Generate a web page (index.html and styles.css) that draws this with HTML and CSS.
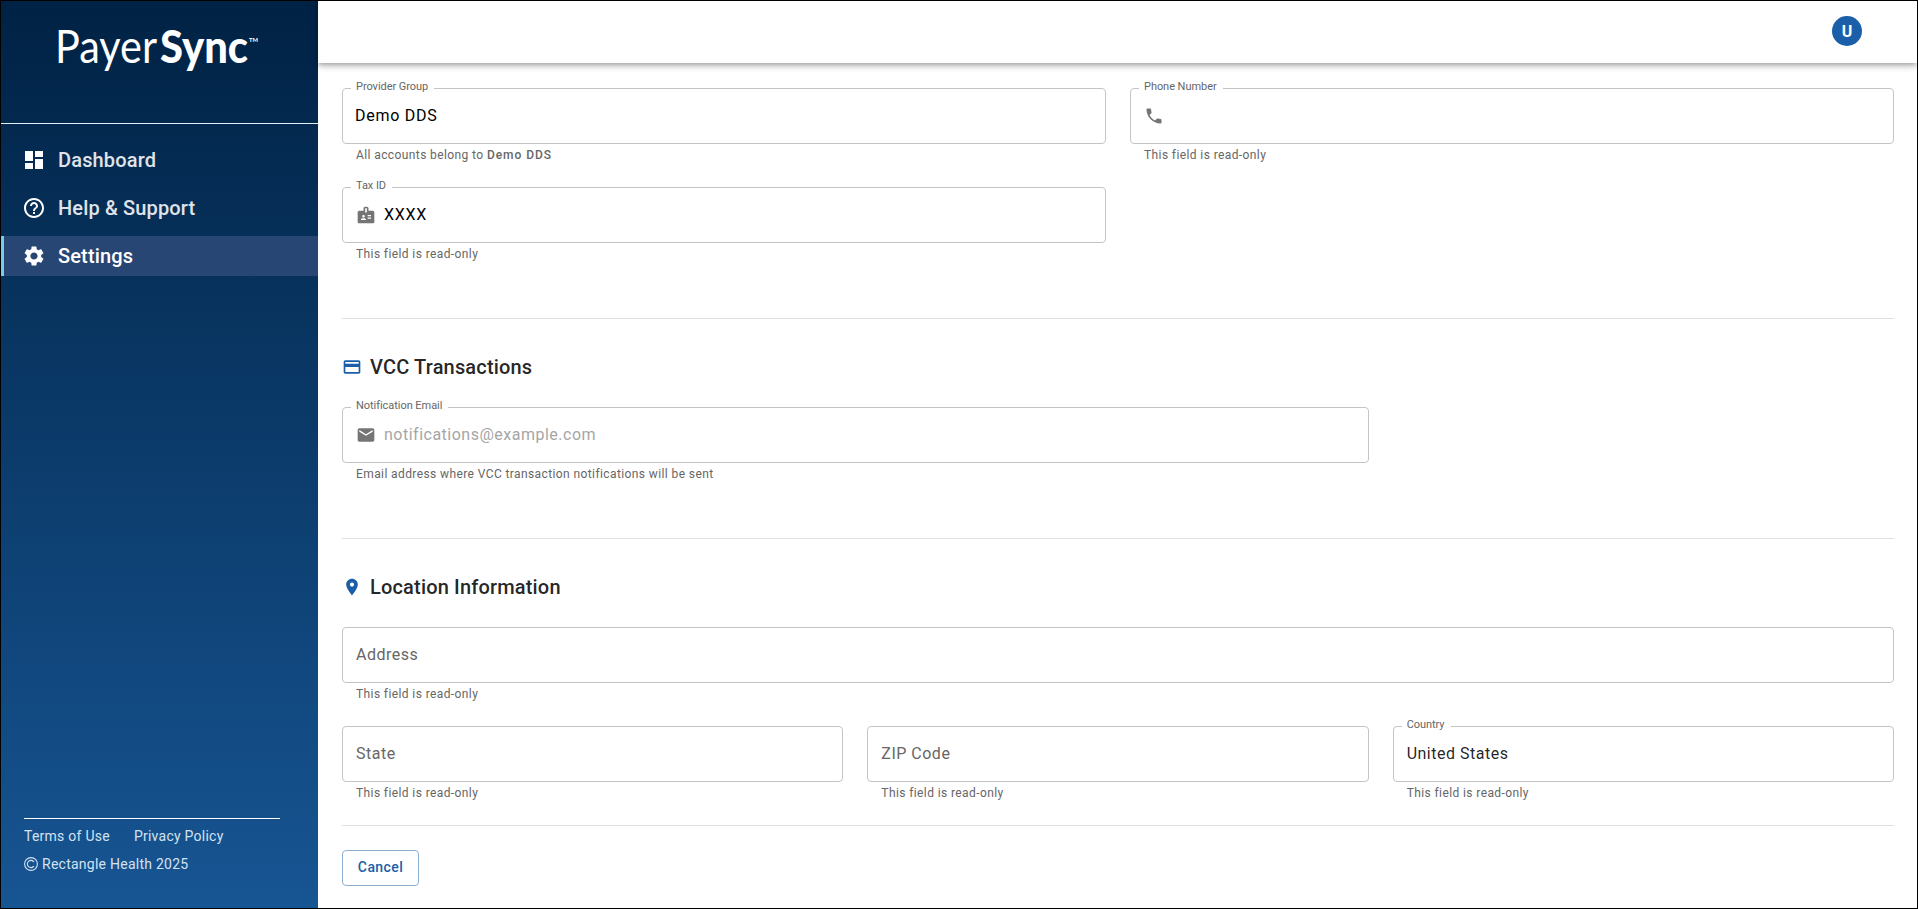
FILE: index.html
```
<!DOCTYPE html>
<html lang="en">
<head>
    <meta charset="UTF-8">
    <meta name="viewport" content="width=device-width, initial-scale=1.0">
    <title>PayerSync - Settings</title>
    <link rel="stylesheet" href="styles.css">
</head>
<body>
    <div class="app">
        <aside class="sidebar">
            <div class="logo">
                <svg width="210" height="54" viewBox="0 0 210 54" fill="#fff">
                    <text class="logo-light" x="-3" y="41" textLength="102" lengthAdjust="spacingAndGlyphs">Payer</text>
                    <text class="logo-bold" x="102" y="41" textLength="88" lengthAdjust="spacingAndGlyphs">Sync</text>
                    <text class="logo-tm" x="191" y="20" textLength="9" lengthAdjust="spacingAndGlyphs">TM</text>
                </svg>
            </div>
            <nav class="menu">
                <a class="menu-item" href="#">
                    <svg viewBox="0 0 24 24"><path d="M3 13h8V3H3v10zm0 8h8v-6H3v6zm10 0h8V11h-8v10zm0-18v6h8V3h-8z"/></svg>
                    <span>Dashboard</span>
                </a>
                <a class="menu-item" href="#">
                    <svg viewBox="0 0 24 24"><path d="M11 18h2v-2h-2v2zm1-16C6.48 2 2 6.48 2 12s4.48 10 10 10 10-4.48 10-10S17.52 2 12 2zm0 18c-4.41 0-8-3.59-8-8s3.59-8 8-8 8 3.59 8 8-3.59 8-8 8zm0-14c-2.21 0-4 1.79-4 4h2c0-1.1.9-2 2-2s2 .9 2 2c0 2-3 1.75-3 5h2c0-2.25 3-2.5 3-5 0-2.21-1.79-4-4-4z"/></svg>
                    <span>Help &amp; Support</span>
                </a>
                <a class="menu-item active" href="#">
                    <svg viewBox="0 0 24 24"><path d="M19.14 12.94c.04-.3.06-.61.06-.94 0-.32-.02-.64-.07-.94l2.03-1.58c.18-.14.23-.41.12-.61l-1.92-3.32c-.12-.22-.37-.29-.59-.22l-2.39.96c-.5-.38-1.03-.7-1.62-.94l-.36-2.54c-.04-.24-.24-.41-.48-.41h-3.84c-.24 0-.43.17-.47.41l-.36 2.54c-.59.24-1.13.57-1.62.94l-2.39-.96c-.22-.08-.47 0-.59.22L2.74 8.87c-.12.21-.08.47.12.61l2.03 1.58c-.05.3-.09.63-.09.94s.02.64.07.94l-2.03 1.58c-.18.14-.23.41-.12.61l1.92 3.32c.12.22.37.29.59.22l2.39-.96c.5.38 1.03.7 1.62.94l.36 2.54c.05.24.24.41.48.41h3.84c.24 0 .44-.17.47-.41l.36-2.54c.59-.24 1.13-.56 1.62-.94l2.39.96c.22.08.47 0 .59-.22l1.92-3.32c.12-.22.07-.47-.12-.61l-2.01-1.58zM12 15.6c-1.98 0-3.6-1.62-3.6-3.6s1.62-3.6 3.6-3.6 3.6 1.62 3.6 3.6-1.62 3.6-3.6 3.6z"/></svg>
                    <span>Settings</span>
                </a>
            </nav>
            <footer class="sidebar-footer">
                <div class="footer-links">
                    <a href="#">Terms of Use</a>
                    <a href="#">Privacy Policy</a>
                </div>
                <div class="copyright">
                    <svg viewBox="0 0 14 14"><circle cx="7" cy="7" r="6.4"/><path d="M9.9 4.9A3.6 3.6 0 1 0 9.9 9.1"/></svg>
                    <span>Rectangle Health 2025</span>
                </div>
            </footer>
        </aside>

        <div class="main">
            <header class="topbar">
                <div class="avatar">U</div>
            </header>

            <div class="content">
                <section class="section section-first">
                    <div class="grid">
                        <div class="field col-6">
                            <div class="box select">
                                <label>Provider Group</label>
                                <span class="value dark">Demo DDS</span>
                            </div>
                            <p class="helper">All accounts belong to <strong>Demo DDS</strong></p>
                        </div>
                        <div class="field col-6">
                            <div class="box">
                                <label>Phone Number</label>
                                <svg viewBox="0 0 24 24"><path d="M6.62 10.79c1.44 2.83 3.76 5.14 6.59 6.59l2.2-2.2c.27-.27.67-.36 1.02-.24 1.12.37 2.33.57 3.57.57.55 0 1 .45 1 1V20c0 .55-.45 1-1 1-9.39 0-17-7.61-17-17 0-.55.45-1 1-1h3.5c.55 0 1 .45 1 1 0 1.25.2 2.45.57 3.57.11.35.03.74-.25 1.02l-2.2 2.2z"/></svg>
                            </div>
                            <p class="helper">This field is read-only</p>
                        </div>
                        <div class="field col-6">
                            <div class="box">
                                <label>Tax ID</label>
                                <svg viewBox="0 0 24 24"><path d="M20 7h-5V4c0-1.1-.9-2-2-2h-2c-1.1 0-2 .9-2 2v3H4c-1.1 0-2 .9-2 2v11c0 1.1.9 2 2 2h16c1.1 0 2-.9 2-2V9c0-1.1-.9-2-2-2zM9 12c.83 0 1.5.67 1.5 1.5S9.83 15 9 15s-1.5-.67-1.5-1.5S8.17 12 9 12zm3 6H6v-.75c0-1 2-1.5 3-1.5s3 .5 3 1.5V18zm1-9h-2V4h2v5zm5 7.5h-4V15h4v1.5zm0-3h-4V12h4v1.5z"/></svg>
                                <span class="value dark">XXXX</span>
                            </div>
                            <p class="helper">This field is read-only</p>
                        </div>
                    </div>
                </section>

                <section class="section">
                    <h2>
                        <svg viewBox="0 0 24 24"><path d="M20 4H4c-1.11 0-1.99.89-1.99 2L2 18c0 1.11.89 2 2 2h16c1.11 0 2-.89 2-2V6c0-1.11-.89-2-2-2zm0 14H4v-6h16v6zm0-10H4V6h16v2z"/></svg>
                        VCC Transactions
                    </h2>
                    <div class="grid">
                        <div class="field col-8">
                            <div class="box">
                                <label>Notification Email</label>
                                <svg viewBox="0 0 24 24"><path d="M20 4H4c-1.1 0-1.99.9-1.99 2L2 18c0 1.1.9 2 2 2h16c1.1 0 2-.9 2-2V6c0-1.1-.9-2-2-2zm0 4l-8 5-8-5V6l8 5 8-5v2z"/></svg>
                                <span class="value placeholder">notifications@example.com</span>
                            </div>
                            <p class="helper">Email address where VCC transaction notifications will be sent</p>
                        </div>
                    </div>
                </section>

                <section class="section section-last">
                    <h2>
                        <svg viewBox="0 0 24 24"><path d="M12 2C8.13 2 5 5.13 5 9c0 5.25 7 13 7 13s7-7.75 7-13c0-3.87-3.13-7-7-7zm0 9.5c-1.38 0-2.5-1.12-2.5-2.5s1.12-2.5 2.5-2.5 2.5 1.12 2.5 2.5-1.12 2.5-2.5 2.5z"/></svg>
                        Location Information
                    </h2>
                    <div class="grid">
                        <div class="field col-12">
                            <div class="box"><span class="value muted">Address</span></div>
                            <p class="helper">This field is read-only</p>
                        </div>
                        <div class="field col-4">
                            <div class="box"><span class="value muted">State</span></div>
                            <p class="helper">This field is read-only</p>
                        </div>
                        <div class="field col-4">
                            <div class="box"><span class="value muted">ZIP Code</span></div>
                            <p class="helper">This field is read-only</p>
                        </div>
                        <div class="field col-4">
                            <div class="box">
                                <label>Country</label>
                                <span class="value">United States</span>
                            </div>
                            <p class="helper">This field is read-only</p>
                        </div>
                    </div>
                </section>

                <div class="actions">
                    <button class="btn-cancel">Cancel</button>
                </div>
            </div>
        </div>
    </div>
</body>
</html>
```
FILE: styles.css
```
* {
    box-sizing: border-box;
}

body {
    margin: 0;
    font-family: Roboto, "Liberation Sans", sans-serif;
    color: rgba(0, 0, 0, 0.87);
}

.app {
    display: flex;
    height: 100vh;
    border: 1px solid #000;
    background-color: #fff;
    overflow: hidden;
}

/* Sidebar */
.sidebar {
    width: 317px;
    flex-shrink: 0;
    display: flex;
    flex-direction: column;
    background: linear-gradient(180deg, #002244 0%, #175593 100%);
    color: #fff;
}

.logo {
    height: 123px;
    padding: 21px 0 0 57px;
    border-bottom: 1px solid #e3edf6;
}

.logo svg {
    display: block;
    overflow: visible;
}

.logo-light {
    font-family: Lato, sans-serif;
    font-size: 46px;
    font-weight: 400;
}

.logo-bold {
    font-family: Lato, sans-serif;
    font-size: 46px;
    font-weight: 900;
}

.logo-tm {
    font-family: Lato, sans-serif;
    font-size: 6px;
    font-weight: 700;
}

.menu {
    display: flex;
    flex-direction: column;
    gap: 8px;
    padding-top: 16px;
}

.menu-item {
    display: flex;
    align-items: center;
    gap: 12px;
    height: 40px;
    padding-left: 18px;
    border-left: 3px solid transparent;
    color: #e0e4e9;
    font-size: 20px;
    font-weight: 500;
    letter-spacing: 0.15px;
    text-decoration: none;
}

.menu-item svg {
    width: 24px;
    height: 24px;
    fill: #fff;
}

.menu-item.active {
    background-color: #284673;
    border-left-color: #74cbea;
    color: #fff;
}

.sidebar-footer {
    width: 256px;
    margin: auto 0 34px 23px;
    padding-top: 7px;
    border-top: 1px solid #fff;
    font-size: 14px;
    line-height: 20px;
    letter-spacing: 0.25px;
    color: #d3e2f2;
}

.footer-links {
    display: flex;
    gap: 24px;
}

.footer-links a {
    color: inherit;
    text-decoration: none;
}

.copyright {
    display: flex;
    align-items: center;
    gap: 4px;
    margin-top: 8px;
}

.copyright svg {
    width: 14px;
    height: 14px;
    fill: none;
    stroke: #d3e2f2;
    stroke-width: 1.1;
}

/* Main area */
.main {
    flex: 1;
    min-width: 0;
}

.topbar {
    position: relative;
    display: flex;
    align-items: center;
    justify-content: flex-end;
    height: 62px;
    padding: 0 55px 2px 0;
    background-color: #fff;
    box-shadow: 0 2px 4px -1px rgba(0, 0, 0, 0.2), 0 4px 5px 0 rgba(0, 0, 0, 0.14), 0 1px 10px 0 rgba(0, 0, 0, 0.12);
}

.avatar {
    width: 30px;
    height: 30px;
    border-radius: 50%;
    background-color: #1a5fa8;
    color: #fff;
    font-size: 16px;
    font-weight: 700;
    line-height: 31px;
    text-align: center;
}

.content {
    padding: 25px 23px 0 24px;
}

.section {
    height: 220px;
    padding-top: 35px;
    border-bottom: 1px solid #e0e0e0;
}

.section-first {
    height: 231px;
    padding-top: 0;
}

.section-last {
    height: 287px;
}

h2 {
    display: flex;
    align-items: center;
    gap: 8px;
    height: 26px;
    margin: 0 0 27px;
    font-size: 20px;
    font-weight: 500;
    letter-spacing: 0.17px;
}

h2 svg {
    width: 20px;
    height: 20px;
    fill: #1a5fa8;
}

.grid {
    display: grid;
    grid-template-columns: repeat(12, 1fr);
    gap: 24px;
}

.col-4 { grid-column: span 4; }
.col-6 { grid-column: span 6; }
.col-8 { grid-column: span 8; }
.col-12 { grid-column: span 12; }

.box {
    position: relative;
    display: flex;
    align-items: center;
    gap: 8px;
    height: 56px;
    padding: 0 13px;
    border: 1px solid #c4c4c4;
    border-radius: 4px;
}

.box.select {
    padding-left: 12px;
}

/* floating label sits on the border */
.box label {
    position: absolute;
    top: -10px;
    left: 8px;
    padding: 0 6px 0 5px;
    background-color: #fff;
    color: #666;
    font-size: 11px;
    line-height: 16px;
    letter-spacing: -0.05px;
}

.box svg {
    width: 20px;
    height: 20px;
    fill: #757575;
}

.value {
    font-size: 16px;
    line-height: 23px;
    letter-spacing: 0.5px;
    padding-bottom: 1px;
}

.value.dark {
    color: #000;
    letter-spacing: 0.75px;
}

.value.muted {
    color: #666;
}

.value.placeholder {
    color: #a6a6a6;
}

.helper {
    margin: 3px 14px 0;
    color: #666;
    font-size: 12px;
    line-height: 16px;
    letter-spacing: 0.4px;
}

.helper strong {
    font-weight: 500;
    letter-spacing: 0.95px;
}

.actions {
    padding-top: 24px;
}

.btn-cancel {
    width: 77px;
    height: 36px;
    padding: 0 0 2px;
    border: 1px solid #8cafd3;
    border-radius: 4px;
    background-color: #fff;
    color: #1a5fa8;
    font-family: inherit;
    font-size: 14px;
    font-weight: 500;
    letter-spacing: 0.4px;
    cursor: pointer;
}
```
